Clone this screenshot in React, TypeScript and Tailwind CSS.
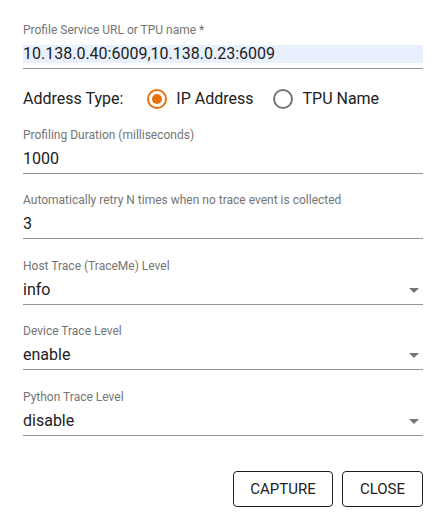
import React from "react";

const font = { fontFamily: "Roboto, 'Liberation Sans', sans-serif" };

function Arrow() {
  return (
    <svg width="10" height="5" viewBox="0 0 10 5" className="mr-[4px] shrink-0">
      <path d="M0 0 L10 0 L5 5 Z" fill="#757575" />
    </svg>
  );
}

function Field({
  label,
  value,
  mt,
  select,
  highlight,
}: {
  label: string;
  value: string;
  mt: string;
  select?: boolean;
  highlight?: boolean;
}) {
  return (
    <div className={`${mt} border-b border-[#949494]`}>
      <div className="pt-[1px] text-[12px] leading-[15px] text-[#757575]">{label}</div>
      <div className="mt-[7px] pb-[5px] flex items-center justify-between">
        <div
          className={`text-[16px] leading-[18px] text-[#212121] ${
            highlight ? "bg-[#e8f0fe] w-full" : ""
          }`}
        >
          {value}
        </div>
        {select && <Arrow />}
      </div>
    </div>
  );
}

function Radio({ checked }: { checked: boolean }) {
  return (
    <span
      className={`w-[20px] h-[20px] rounded-full border-2 flex items-center justify-center shrink-0 ${
        checked ? "border-[#e8710a]" : "border-[#757575]"
      }`}
    >
      {checked && <span className="w-[10px] h-[10px] rounded-full bg-[#e8710a]" />}
    </span>
  );
}

export default function App() {
  return (
    <div className="bg-white w-[446px] h-[523px] px-[23px] pt-[22px] pb-[16px]" style={font}>
      <Field
        label="Profile Service URL or TPU name *"
        value="10.138.0.40:6009,10.138.0.23:6009"
        mt="mt-0"
        highlight
      />
      <div className="mt-[20px] h-[20px] flex items-center text-[16px] text-[#212121]">
        <span className="mr-[24px]">Address Type:</span>
        <Radio checked />
        <span className="ml-[9px] mr-[20px]">IP Address</span>
        <Radio checked={false} />
        <span className="ml-[9px]">TPU Name</span>
      </div>
      <Field label="Profiling Duration (milliseconds)" value="1000" mt="mt-[18px]" />
      <Field
        label="Automatically retry N times when no trace event is collected"
        value="3"
        mt="mt-[18px]"
      />
      <Field label="Host Trace (TraceMe) Level" value="info" mt="mt-[19px]" select />
      <Field label="Device Trace Level" value="enable" mt="mt-[18px]" select />
      <Field label="Python Trace Level" value="disable" mt="mt-[19px]" select />
      <div className="mt-[35px] flex justify-end gap-[9px]">
        <button className="h-[36px] w-[100px] border border-[#1f1f1f] rounded-[4px] text-[15px] text-[#212121] bg-white">
          CAPTURE
        </button>
        <button className="h-[36px] w-[81px] border border-[#1f1f1f] rounded-[4px] text-[15px] text-[#212121] bg-white">
          CLOSE
        </button>
      </div>
    </div>
  );
}
